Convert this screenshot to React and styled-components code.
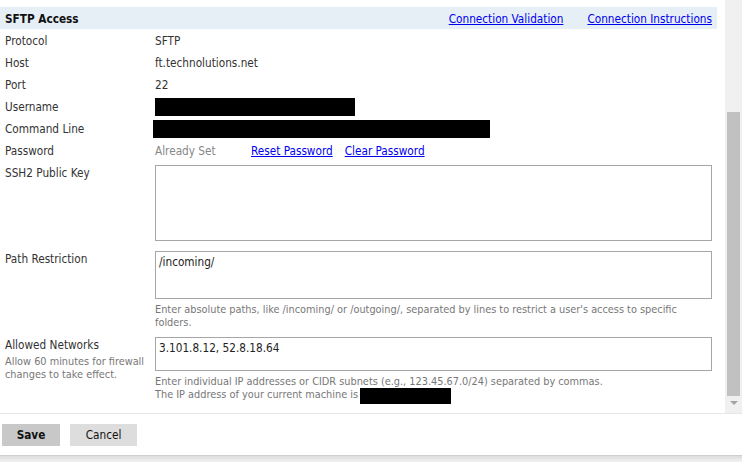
import styled, { createGlobalStyle } from 'styled-components';

const GlobalStyle = createGlobalStyle`
  html, body {
    margin: 0;
    padding: 0;
    background: #fff;
  }
  body {
    font-family: "DejaVu Sans Condensed", "DejaVu Sans", sans-serif;
    font-stretch: condensed;
    font-size: 11.7px;
    color: #333;
  }
`;

const Frame = styled.div`
  width: 742px;
  height: 462px;
  display: flex;
  flex-direction: column;
  overflow: hidden;
`;

const Main = styled.div`
  display: flex;
  height: 413px;
  border-bottom: 1px solid #e6e6e6;
`;

const Content = styled.div`
  flex: 1;
  padding: 7px 8px 0 0;
`;

const HeaderBar = styled.div`
  display: flex;
  box-sizing: border-box;
  height: 22px;
  padding: 2px 5px 0;
  line-height: 20px;
  background: #e6eff6;
`;

const Title = styled.div`
  flex: 1;
  font-weight: bold;
  color: #111;
`;

const Link = styled.a`
  color: #0000ee;
  text-decoration: underline;
  cursor: pointer;
  margin-left: ${(p) => p.$gap || 0}px;
`;

const Row = styled.div`
  display: grid;
  grid-template-columns: 150px 1fr;
  padding: 2px 5px 0;
  line-height: 20px;
  margin-bottom: ${(p) => p.$after || 0}px;
`;

const Label = styled.div`
  color: #333;
`;

const SubLabel = styled.div`
  font-size: 10.85px;
  line-height: 13px;
  color: #777;
`;

const Value = styled.div`
  display: flex;
  align-items: center;
  color: #333;
`;

const Redacted = styled.span`
  display: inline-block;
  background: #000;
  width: ${(p) => p.$w}px;
  height: ${(p) => p.$h || 18}px;
  margin-left: ${(p) => p.$shift || 0}px;
  vertical-align: ${(p) => p.$valign || 'middle'};
`;

const Muted = styled.span`
  color: #888;
  width: 96px;
`;

const Field = styled.div`
  display: flex;
  flex-direction: column;
  padding-top: 2px;
`;

const Box = styled.textarea`
  display: block;
  box-sizing: border-box;
  width: 100%;
  height: ${(p) => p.$h}px;
  margin: 0;
  padding: 3px 3px;
  border: 1px solid #a6a6a6;
  font: inherit;
  font-stretch: condensed;
  line-height: 14px;
  color: #222;
  resize: none;
  outline: none;
  overflow: hidden;
`;

const Hint = styled.div`
  margin-top: 4px;
  font-size: 10.85px;
  line-height: 13px;
  color: #777;
`;

const Scrollbar = styled.div`
  width: 17px;
  background: #f0f0f0;
  display: flex;
  flex-direction: column;
  align-items: center;
  padding-top: 112px;
  box-sizing: border-box;
`;

const Thumb = styled.div`
  width: 13px;
  height: 284px;
  background: #c1c1c1;
`;

const Arrow = styled.div`
  margin-top: 5px;
  width: 0;
  height: 0;
  border-left: 4px solid transparent;
  border-right: 4px solid transparent;
  border-top: 4px solid #a3a3a3;
`;

const Footer = styled.div`
  flex: 1;
  display: flex;
  align-items: flex-start;
  padding: 10px 0 0 2px;
  gap: 10px;
  border-bottom: 1px solid #cfcfcf;
`;

const Button = styled.button`
  height: 22px;
  width: ${(p) => p.$w}px;
  border: none;
  margin: 0;
  padding: 0;
  background: ${(p) => (p.$primary ? '#c8c8c8' : '#dddddd')};
  color: #111;
  font: inherit;
  font-stretch: condensed;
  font-weight: ${(p) => (p.$primary ? 'bold' : 'normal')};
`;

const Shadow = styled.div`
  height: 6px;
  background: linear-gradient(#dcdcdc, #f2f2f2);
`;

export default function App() {
  return (
    <>
      <GlobalStyle />
      <Frame>
        <Main>
          <Content>
            <HeaderBar>
              <Title>SFTP Access</Title>
              <Link>Connection Validation</Link>
              <Link $gap={24}>Connection Instructions</Link>
            </HeaderBar>
            <Row>
              <Label>Protocol</Label>
              <Value>SFTP</Value>
            </Row>
            <Row>
              <Label>Host</Label>
              <Value>ft.technolutions.net</Value>
            </Row>
            <Row>
              <Label>Port</Label>
              <Value>22</Value>
            </Row>
            <Row>
              <Label>Username</Label>
              <Value>
                <Redacted $w={200} />
              </Value>
            </Row>
            <Row>
              <Label>Command Line</Label>
              <Value>
                <Redacted $w={337} $shift={-2} />
              </Value>
            </Row>
            <Row>
              <Label>Password</Label>
              <Value>
                <Muted>Already Set</Muted>
                <Link>Reset Password</Link>
                <Link $gap={12}>Clear Password</Link>
              </Value>
            </Row>
            <Row $after={6}>
              <Label>SSH2 Public Key</Label>
              <Field>
                <Box $h={76} defaultValue="" readOnly />
              </Field>
            </Row>
            <Row $after={4}>
              <Label>Path Restriction</Label>
              <Field>
                <Box $h={48} defaultValue="/incoming/" readOnly />
                <Hint>
                  Enter absolute paths, like /incoming/ or /outgoing/, separated
                  by lines to restrict a user's access to specific
                  <br />
                  folders.
                </Hint>
              </Field>
            </Row>
            <Row>
              <div>
                <Label>Allowed Networks</Label>
                <SubLabel>
                  Allow 60 minutes for firewall
                  <br />
                  changes to take effect.
                </SubLabel>
              </div>
              <Field>
                <Box $h={34} defaultValue="3.101.8.12, 52.8.18.64" readOnly />
                <Hint>
                  Enter individual IP addresses or CIDR subnets (e.g.,
                  123.45.67.0/24) separated by commas.
                  <br />
                  The IP address of your current machine is
                  <Redacted $w={91} $h={16} $shift={2} $valign="-6px" />
                </Hint>
              </Field>
            </Row>
          </Content>
          <Scrollbar>
            <Thumb />
            <Arrow />
          </Scrollbar>
        </Main>
        <Footer>
          <Button $primary $w={58}>
            Save
          </Button>
          <Button $w={67}>Cancel</Button>
        </Footer>
        <Shadow />
      </Frame>
    </>
  );
}
